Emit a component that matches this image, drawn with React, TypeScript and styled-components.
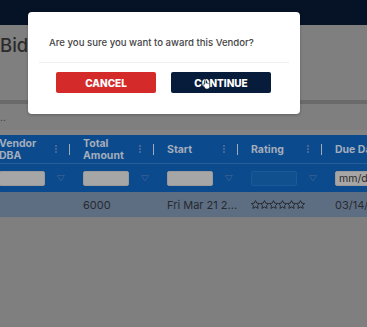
import React from "react";
import styled, { createGlobalStyle } from "styled-components";

const Global = createGlobalStyle`
  html, body { margin: 0; padding: 0; }
  body { width: 367px; height: 327px; overflow: hidden; background: #7f7f7f; font-family: "Inter", "Noto Sans", sans-serif; }
  * { box-sizing: border-box; }
`;

const Page = styled.div`
  position: relative;
  width: 367px;
  height: 327px;
  background: #7f7f7f;
  overflow: hidden;
  display: flex;
  flex-direction: column;
`;

const TopBar = styled.div`
  height: 25px;
  background: #061326;
  flex-shrink: 0;
`;

const TitleRow = styled.div`
  height: 75px;
  display: flex;
  align-items: flex-start;
  padding-top: 8px;
`;

const Title = styled.h1`
  margin: 0;
  font-size: 18.5px;
  font-weight: 500;
  color: #2b2b2b;
  line-height: 24px;
`;

const Band = styled.div`
  height: 4px;
  background: #6a6a6a;
`;

const Toolbar = styled.div`
  height: 26px;
  display: flex;
  align-items: center;
  font-size: 10px;
  color: #3a3a3a;
  line-height: 1;
`;

const Gap = styled.div`
  height: 5px;
  background: #838383;
`;

const Grid = styled.div`
  display: flex;
  flex-direction: column;
  margin-left: -1px;
`;

const HeaderRow = styled.div`
  height: 29px;
  background: #0b4a8d;
  display: grid;
  grid-template-columns: repeat(5, 84px);
  border-bottom: 1px solid #2a5e98;
`;

const HeaderCell = styled.div`
  position: relative;
  display: flex;
  align-items: center;
  padding-top: 1px;
  font-family: "Inter", "Noto Sans", sans-serif;
  font-weight: 700;
  font-size: 10.5px;
  line-height: 12px;
  color: #a3adbb;
  white-space: pre;
`;

const Dots = styled.span`
  position: absolute;
  left: 56px;
  top: 10px;
  width: 2px;
  display: flex;
  flex-direction: column;
  gap: 1px;
  & > i { display: block; width: 2px; height: 2px; background: #43689a; }
`;

const Bar = styled.span`
  position: absolute;
  left: 70px;
  top: 9px;
  width: 1px;
  height: 11px;
  background: #a1abb9;
`;

const FilterRow = styled.div`
  height: 28px;
  background: #0b4a8d;
  display: grid;
  grid-template-columns: repeat(5, 84px);
  align-items: center;
`;

const FilterCell = styled.div`
  display: flex;
  align-items: center;
  gap: 12px;
`;

const FilterInput = styled.div<{ $dim?: boolean }>`
  width: 46px;
  height: 15px;
  border-radius: 2px;
  background: ${(p) => (p.$dim ? "#11508f" : "#a6a6a6")};
  border: 1px solid ${(p) => (p.$dim ? "#1a5a98" : "#9a9a9a")};
  font-size: 10.5px;
  color: #2a2a2a;
  line-height: 13px;
  padding-left: 3px;
  white-space: nowrap;
  overflow: hidden;
`;

const DataRow = styled.div`
  height: 25px;
  background: #5e6e82;
  display: grid;
  grid-template-columns: repeat(5, 84px);
  align-items: center;
`;

const DataCell = styled.div`
  font-size: 11px;
  color: #262a30;
  white-space: nowrap;
  overflow: hidden;
`;

const Stars = styled.div`
  display: flex;
  gap: 0px;
`;

const Modal = styled.div`
  position: absolute;
  left: 28px;
  top: 12px;
  width: 272px;
  height: 102px;
  background: #fff;
  border-radius: 4px;
  box-shadow: 0 1px 3px rgba(0,0,0,0.25);
  display: flex;
  flex-direction: column;
  padding: 0 11px;
`;

const Question = styled.p`
  margin: 0;
  padding: 25px 0 0 10px;
  height: 50px;
  font-size: 9.6px;
  font-weight: 500;
  color: #454545;
  line-height: 12px;
  white-space: nowrap;
`;

const Divider = styled.div`
  height: 1px;
  background: #eeeeee;
`;

const Actions = styled.div`
  display: flex;
  gap: 15px;
  padding: 9px 0 0 17px;
`;

const Btn = styled.button<{ $variant: "cancel" | "continue" }>`
  position: relative;
  width: 100px;
  height: 21px;
  border: none;
  border-radius: 2px;
  background: ${(p) => (p.$variant === "cancel" ? "#d42a2a" : "#071c3a")};
  color: #fff;
  font-family: "Inter", "Noto Sans", sans-serif;
  font-weight: 800;
  font-size: 10px;
  text-transform: uppercase;
  padding: 0;
  cursor: pointer;
`;

const Cursor = styled.svg`
  position: absolute;
  left: 31px;
  top: 6px;
`;

const Star = () => (
  <svg width="9" height="9" viewBox="1 1 22 21" fill="none" stroke="#262a30" strokeWidth="2.4" strokeLinejoin="round">
    <path d="M12 1.8l3.1 6.4 7 .9-5.1 4.9 1.3 7L12 17.6l-6.3 3.4 1.3-7L1.9 9.1l7-.9z" />
  </svg>
);

const Filter = () => (
  <svg width="8" height="7" viewBox="0 0 8 7">
    <path d="M0.5 0.5h7L4 6z" fill="none" stroke="#2f5c90" strokeWidth="1" />
  </svg>
);

const headers = ["Vendor\nDBA", "Total\nAmount", "Start", "Rating", "Due Date"];

export default function App() {
  return (
    <>
      <Global />
      <Page>
        <TopBar />
        <TitleRow>
          <Title>Bids</Title>
        </TitleRow>
        <Band />
        <Toolbar>..</Toolbar>
        <Gap />
        <Grid>
          <HeaderRow>
            {headers.map((h, i) => (
              <HeaderCell key={i}>
                {h}
                {i < 4 && (
                  <>
                    <Dots><i /><i /><i /></Dots>
                    <Bar />
                  </>
                )}
              </HeaderCell>
            ))}
          </HeaderRow>
          <FilterRow>
            <FilterCell><FilterInput /><Filter /></FilterCell>
            <FilterCell><FilterInput /><Filter /></FilterCell>
            <FilterCell><FilterInput /><Filter /></FilterCell>
            <FilterCell><FilterInput $dim /><Filter /></FilterCell>
            <FilterCell><FilterInput>mm/dd/yyyy</FilterInput></FilterCell>
          </FilterRow>
          <DataRow>
            <DataCell />
            <DataCell>6000</DataCell>
            <DataCell>Fri Mar 21 2...</DataCell>
            <DataCell>
              <Stars>{[0, 1, 2, 3, 4, 5].map((s) => <Star key={s} />)}</Stars>
            </DataCell>
            <DataCell>03/14/2025</DataCell>
          </DataRow>
        </Grid>
        <Modal>
          <Question>Are you sure you want to award this Vendor?</Question>
          <Divider />
          <Actions>
            <Btn $variant="cancel">Cancel</Btn>
            <Btn $variant="continue">
              Continue
              <Cursor width="9" height="11" viewBox="0 0 9 11">
                <path d="M3 1.2c.6 0 1 .4 1 1v3l.3-.2c.5-.2 1 0 1.2.4.5-.2 1 0 1.2.4.5-.1 1 .2 1 .8v2.2c0 1.3-1 2.2-2.3 2.2H4.6c-.8 0-1.4-.4-1.8-1L1.2 7.3c-.3-.5-.1-1 .4-1.2.4-.2.8 0 1 .3V2.2c0-.6.4-1 .4-1z" fill="#fff" stroke="#222" strokeWidth="0.6" />
              </Cursor>
            </Btn>
          </Actions>
        </Modal>
      </Page>
    </>
  );
}
